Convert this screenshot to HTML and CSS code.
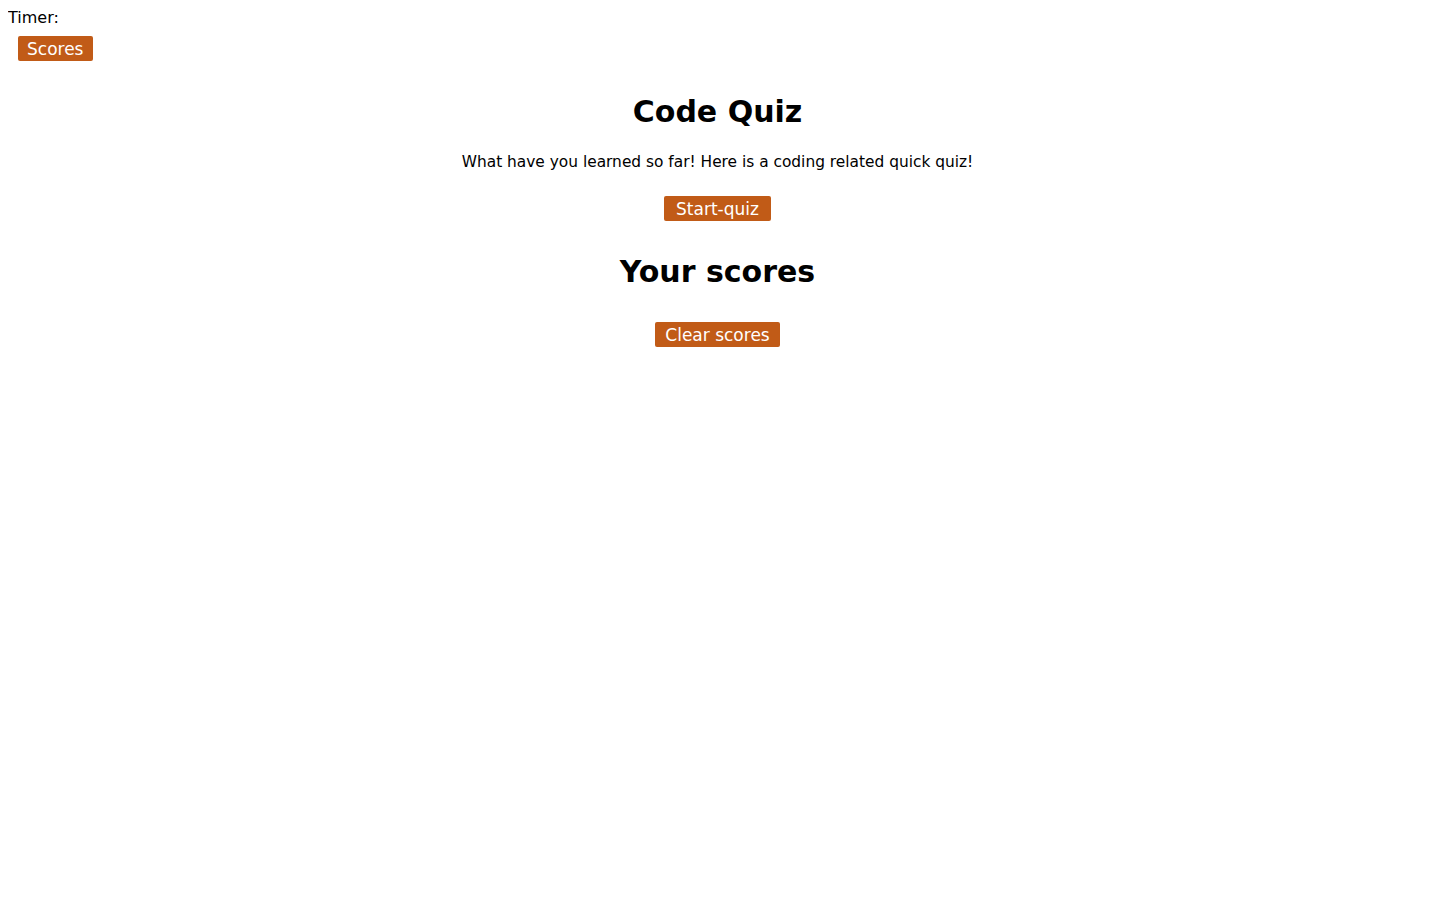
FILE: index.html
```html
<!DOCTYPE html>
<html lang="en">
<head>
<meta charset="utf-8">
<title>Code Quiz</title>
<link rel="stylesheet" href="styles.css">
</head>
<body>
<header class="top">
  <div class="timer">Timer: <span class="time"></span></div>
  <button class="btn btn-scores">Scores</button>
</header>
<main class="quiz">
  <h1 class="title">Code Quiz</h1>
  <p class="intro">What have you learned so far! Here is a coding related quick quiz!</p>
  <button class="btn btn-start">Start-quiz</button>
  <h2 class="scores-title">Your scores</h2>
  <ul class="score-list"></ul>
  <button class="btn btn-clear">Clear scores</button>
</main>
</body>
</html>
```
FILE: styles.css
```css
html, body {
  background: #ffffff;
}
body {
  margin: 8px;
  font-family: "DejaVu Sans", Verdana, sans-serif;
  color: #000000;
}
.top {
  display: flex;
  flex-direction: column;
  align-items: flex-start;
}
.timer {
  font-size: 16px;
  line-height: 19px;
  height: 19px;
}
.btn {
  display: inline-block;
  background: #c15b17;
  color: #ffffff;
  border: none;
  border-radius: 2px;
  font-family: "DejaVu Sans", Verdana, sans-serif;
  font-size: 17px;
  line-height: 25px;
  height: 25px;
  padding: 1px 10px 0;
  cursor: pointer;
}
.btn-start {
  padding: 1px 12px 0;
}
.btn-scores {
  margin: 9px 0 0 10px;
  padding: 1px 10px 0 9px;
}
.quiz {
  display: flex;
  flex-direction: column;
  align-items: center;
  text-align: center;
}
.title, .scores-title {
  font-size: 30px;
  line-height: 40px;
  font-weight: bold;
  margin: 0;
}
.title {
  margin-top: 31px;
}
.intro {
  font-size: 15.4px;
  line-height: 20px;
  margin: 20px 0 24px;
}
.scores-title {
  margin-top: 31px;
}
.score-list {
  margin: 0;
  padding: 0;
  list-style: none;
}
.btn-clear {
  margin-top: 30px;
}
```
